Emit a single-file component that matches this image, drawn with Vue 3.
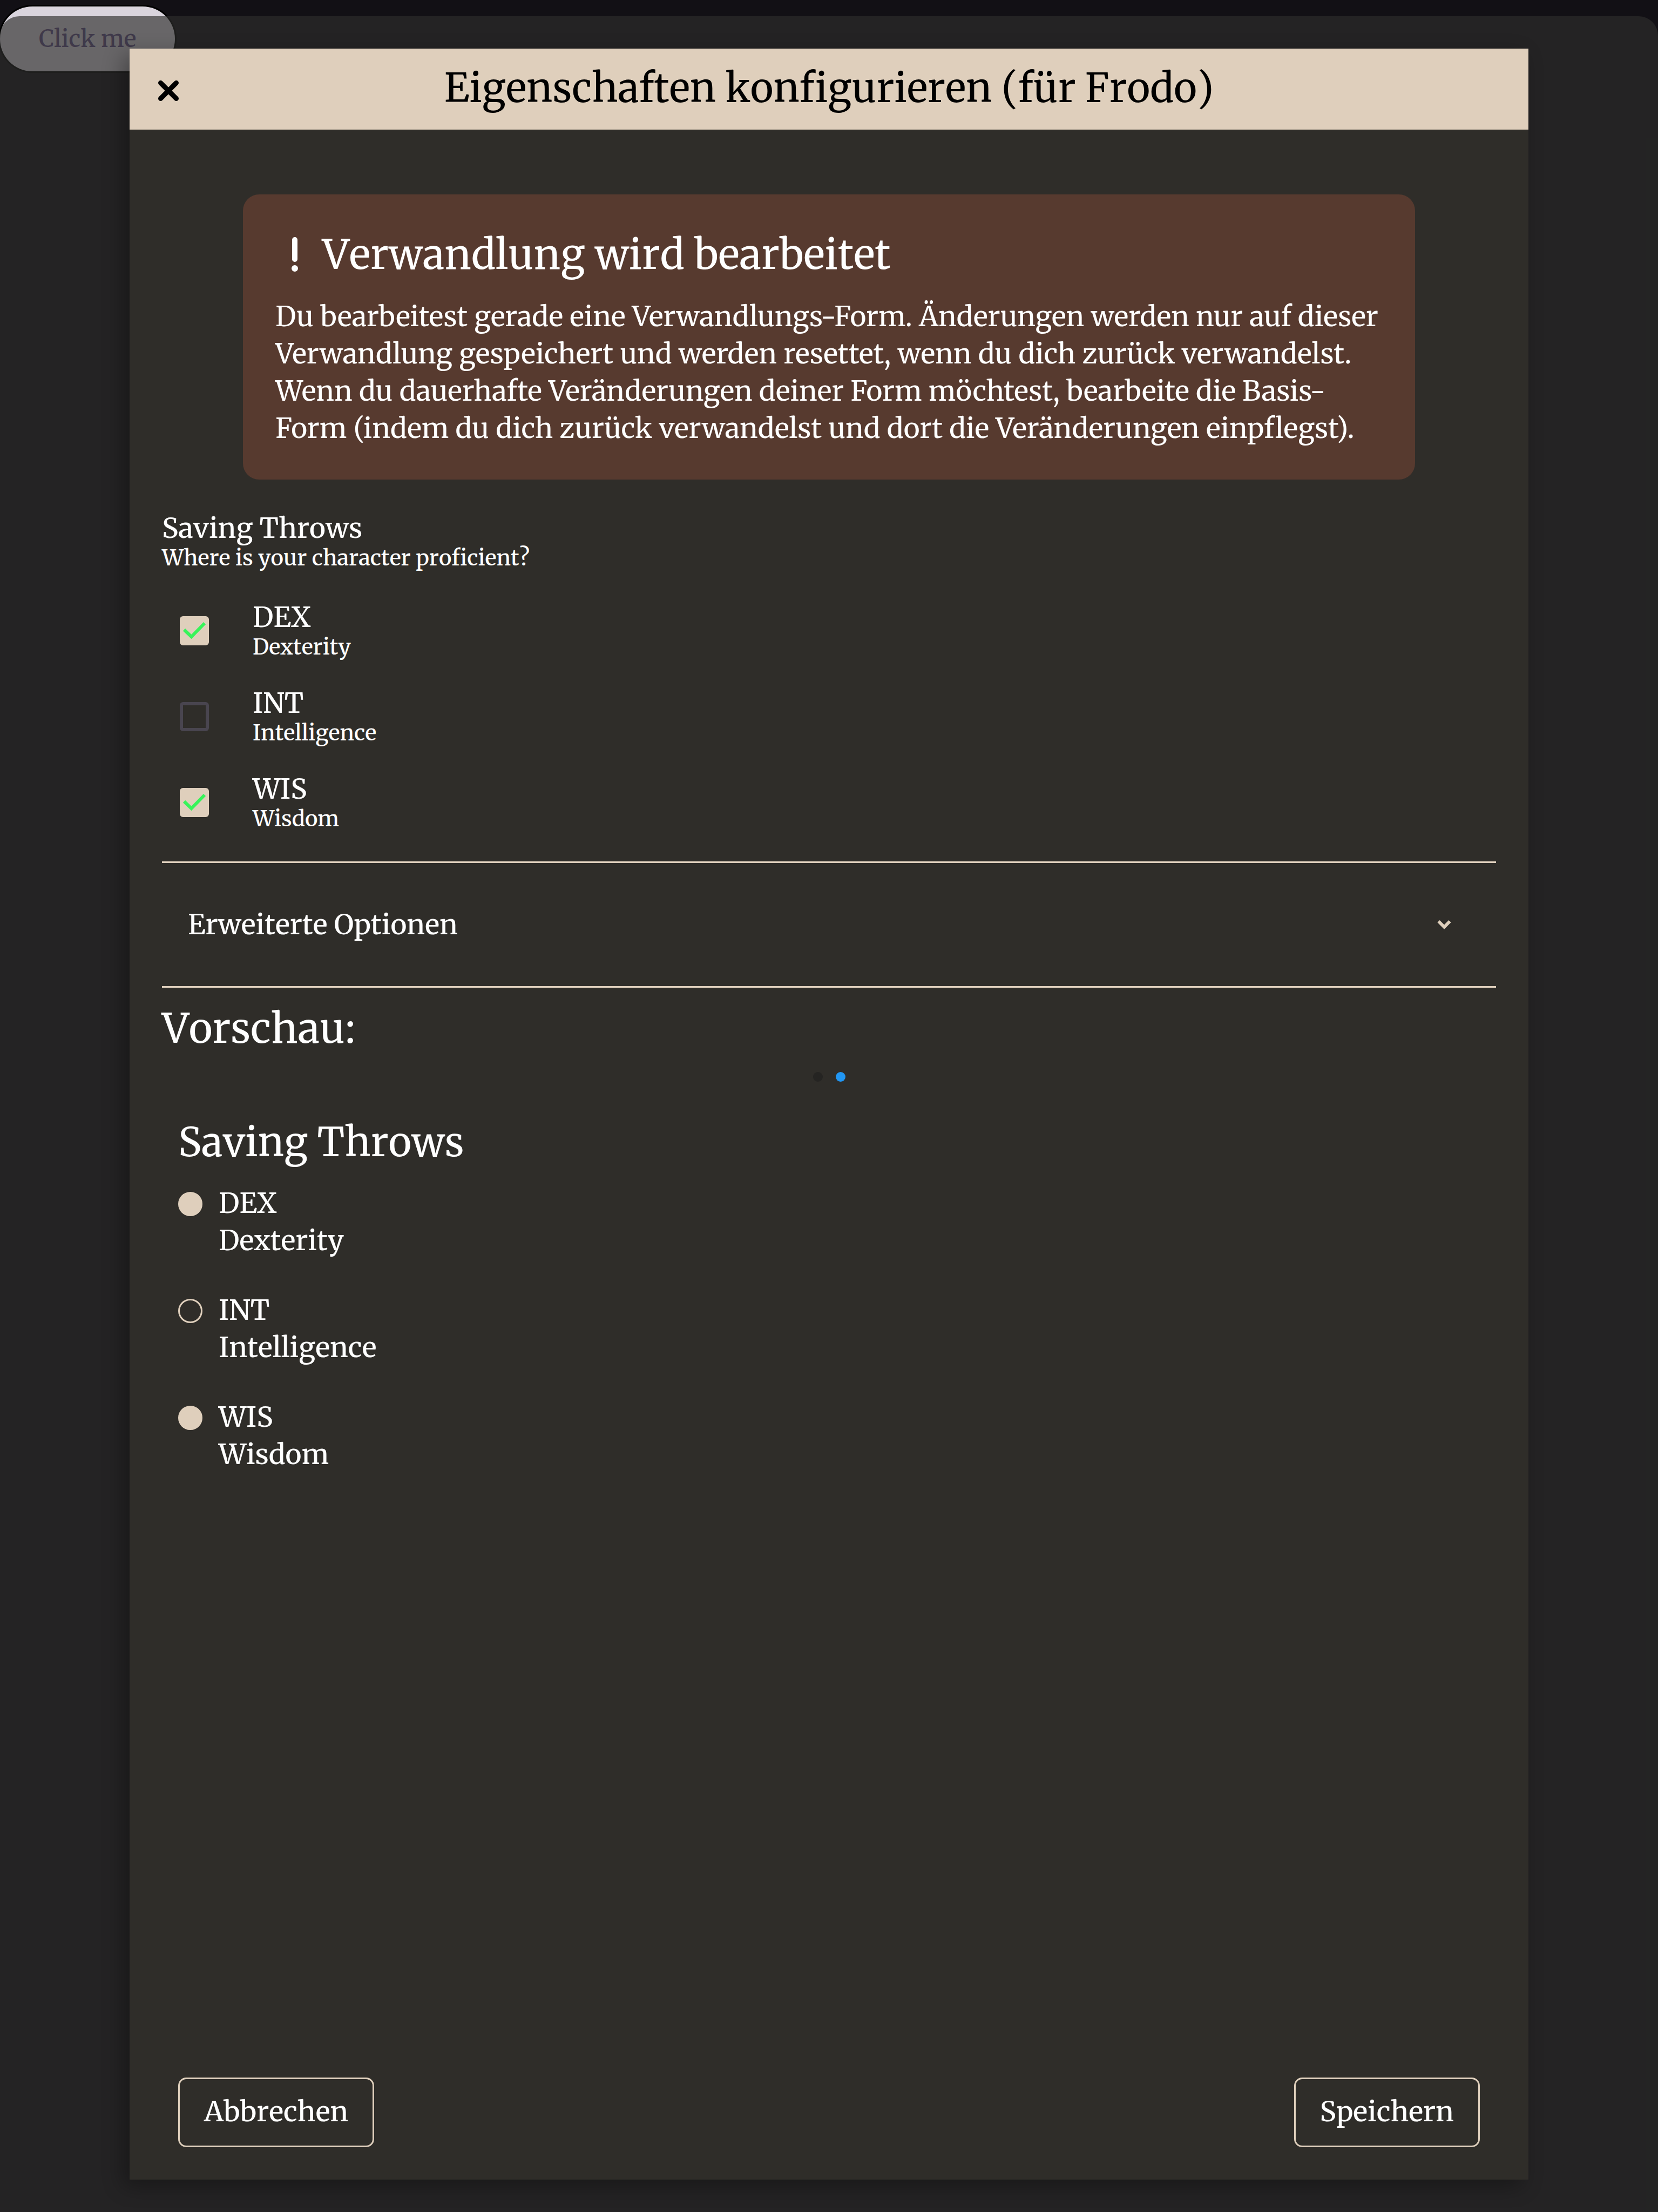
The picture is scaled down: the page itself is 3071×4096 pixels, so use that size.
<script setup>
import { ref, reactive } from 'vue'

const throws = reactive([
  { id: 'dex', short: 'DEX', name: 'Dexterity', proficient: true },
  { id: 'int', short: 'INT', name: 'Intelligence', proficient: false },
  { id: 'wis', short: 'WIS', name: 'Wisdom', proficient: true },
])
const pages = ['Seite 1', 'Seite 2']
const activePage = ref(1)
</script>

<template>
  <div class="page">
    <button type="button" class="launch">Click me</button>

    <div class="scrim">
      <section class="dialog" role="dialog" aria-labelledby="dialog-title">
        <header class="dialog-head">
          <button type="button" class="close" aria-label="Schließen">
            <svg viewBox="0 0 48 48" aria-hidden="true">
              <path d="M9.500 9.500 38.500 38.500M38.500 9.500 9.500 38.500" />
            </svg>
          </button>
          <h1 id="dialog-title">Eigenschaften konfigurieren (für Frodo)</h1>
        </header>

        <div class="dialog-body">
          <aside class="notice">
            <h2>
              <svg viewBox="0 0 72 72" aria-hidden="true">
                <path d="M36 9V45" />
                <circle cx="36" cy="62" r="6" />
              </svg>
              <span>Verwandlung wird bearbeitet</span>
            </h2>
            <p>
              Du bearbeitest gerade eine Verwandlungs-Form. Änderungen werden nur auf dieser
              Verwandlung gespeichert und werden resettet, wenn du dich zurück verwandelst. Wenn du
              dauerhafte Veränderungen deiner Form möchtest, bearbeite die Basis-Form (indem du dich
              zurück verwandelst und dort die Veränderungen einpflegst).
            </p>
          </aside>

          <fieldset class="choices">
            <legend>
              <span class="label">Saving Throws</span>
              <span class="hint">Where is your character proficient?</span>
            </legend>
            <label v-for="t in throws" :key="t.id" class="choice" :for="t.id">
              <span class="box">
                <input :id="t.id" v-model="t.proficient" type="checkbox" />
                <svg v-if="t.proficient" viewBox="0 0 54 54" aria-hidden="true">
                  <path d="M8 25 21.500 38 46 13" />
                </svg>
              </span>
              <span>
                <span class="label">{{ t.short }}</span>
                <span class="hint">{{ t.name }}</span>
              </span>
            </label>
          </fieldset>

          <button type="button" class="expander" aria-expanded="false">
            <span>Erweiterte Optionen</span>
            <svg viewBox="0 0 72 72" aria-hidden="true">
              <path d="M25.500 30 36 40.500 46.500 30" />
            </svg>
          </button>

          <h2 class="preview-title">Vorschau:</h2>
          <nav class="dots" aria-label="Vorschau">
            <button
              v-for="(p, i) in pages"
              :key="p"
              type="button"
              :class="{ active: i === activePage }"
              :aria-label="p"
              @click="activePage = i"
            ></button>
          </nav>

          <section class="preview">
            <h3>Saving Throws</h3>
            <ul>
              <li v-for="t in throws" :key="t.id">
                <span class="mark" :class="{ filled: t.proficient }"></span>
                <span>
                  <span class="line">{{ t.short }}</span>
                  <span class="line">{{ t.name }}</span>
                </span>
              </li>
            </ul>
          </section>
        </div>

        <footer class="actions">
          <button type="button">Abbrechen</button>
          <button type="button">Speichern</button>
        </footer>
      </section>
    </div>
  </div>
</template>

<style>
body {
  background: #121015;
}
</style>

<style scoped>
.page {
  --sand: #dfcfbc;
  position: relative;
  display: flex;
  min-height: 100vh;
  padding-top: 30px;
  box-sizing: border-box;
  background: #121015;
  color: #fff;
  font-family: Merriweather, 'DejaVu Serif Condensed', serif;
  font-size: 51px;
  font-weight: 500;
  line-height: 60px;
  font-kerning: none;
}
.page * {
  box-sizing: border-box;
}
button {
  margin: 0;
  padding: 0;
  border: 0;
  background: none;
  color: inherit;
  font: inherit;
  font-kerning: none;
}
h1,
h2,
h3,
p,
ul {
  margin: 0;
  padding: 0;
}
h1,
h2,
h3 {
  font-weight: 400;
}
svg {
  display: block;
  fill: none;
  stroke: currentColor;
}

.launch {
  position: absolute;
  top: 12px;
  left: 0;
  height: 120px;
  padding: 0 72px;
  border-radius: 60px;
  background: #d9d4dd;
  box-shadow: 0 0 0 3px #000;
  color: #615083;
  font-size: 43px;
}
.scrim {
  position: relative;
  flex: 1;
  display: flex;
  padding: 60px 240px;
  border-radius: 36px 36px 0 0;
  background: rgba(46, 46, 44, 0.66);
}
.dialog {
  flex: 1;
  display: flex;
  flex-direction: column;
  background: #2f2d29;
  box-shadow: -12px 12px 36px rgba(0, 0, 0, 0.32);
}
.dialog-head {
  display: grid;
  grid-template-columns: 144px 1fr 144px;
  height: 150px;
  background: var(--sand);
  color: #000;
}
.dialog-head h1 {
  padding-bottom: 4px;
  font-size: 73px;
  line-height: 146px;
  text-align: center;
}
.close {
  display: flex;
  align-items: center;
  justify-content: center;
  padding-top: 6px;
}
.close svg {
  width: 48px;
  height: 48px;
  stroke-width: 9;
  stroke-linecap: round;
}

.dialog-body {
  flex: 1;
  padding: 120px 60px 60px;
}
.notice {
  margin: 0 150px 60px;
  padding: 60px;
  border-radius: 30px;
  background: #573a2f;
}
.notice h2 {
  display: flex;
  align-items: center;
  gap: 15px;
  margin-bottom: 30px;
  font-size: 75px;
  line-height: 102px;
}
.notice svg {
  width: 72px;
  height: 72px;
  stroke-width: 10;
  stroke-linecap: round;
}
.notice circle {
  fill: currentColor;
  stroke: none;
}
.notice p {
  font-weight: 400;
  font-kerning: normal;
  line-height: 69px;
}

.choices {
  min-width: 0;
  margin: 0 0 30px;
  padding: 0;
  border: 0;
}
.choices legend {
  margin-bottom: 32px;
  padding: 0;
}
.label,
.hint,
.line {
  display: block;
}
.hint {
  font-size: 40px;
  line-height: 50px;
}
.choices legend .hint {
  margin-bottom: -2px;
}
.choice {
  display: flex;
  align-items: center;
  gap: 81px;
  height: 159px;
  padding-left: 33px;
}
.box {
  position: relative;
  width: 54px;
  height: 54px;
}
.box input {
  appearance: none;
  display: block;
  width: 54px;
  height: 54px;
  margin: 0;
  border: 6px solid #49454f;
  border-radius: 6px;
}
.box input:checked {
  border-color: var(--sand);
  background: var(--sand);
}
.box svg {
  position: absolute;
  inset: 0;
  color: #37f45a;
  stroke-width: 6;
  pointer-events: none;
}

.expander {
  display: flex;
  align-items: center;
  justify-content: space-between;
  width: 100%;
  padding: 78px 60px 78px 48px;
  border: solid var(--sand);
  border-width: 3px 0;
}
.expander svg {
  width: 72px;
  height: 72px;
  color: var(--sand);
  stroke-width: 6;
}

.preview-title {
  margin-top: 27px;
  font-size: 75px;
  line-height: 96px;
}
.dots {
  display: flex;
  justify-content: center;
  gap: 24px;
  margin: 33px 0 64px;
}
.dots button {
  width: 18px;
  height: 18px;
  border-radius: 50%;
  background: #252422;
}
.dots .active {
  background: #2196f3;
}
.preview {
  padding-left: 30px;
}
.preview h3 {
  margin-bottom: 31px;
  font-size: 73px;
  line-height: 96px;
}
.preview ul {
  display: grid;
  gap: 60px;
  list-style: none;
}
.preview li {
  display: flex;
  align-items: flex-start;
  gap: 30px;
  line-height: 69px;
}
.mark {
  width: 45px;
  height: 45px;
  margin-top: 13px;
  border: 3px solid var(--sand);
  border-radius: 50%;
}
.mark.filled {
  background: var(--sand);
}

.actions {
  display: flex;
  justify-content: space-between;
  padding: 0 90px 60px;
}
.actions button {
  padding: 30px 45px 33px;
  border: 3px solid var(--sand);
  border-radius: 15px;
}
</style>
